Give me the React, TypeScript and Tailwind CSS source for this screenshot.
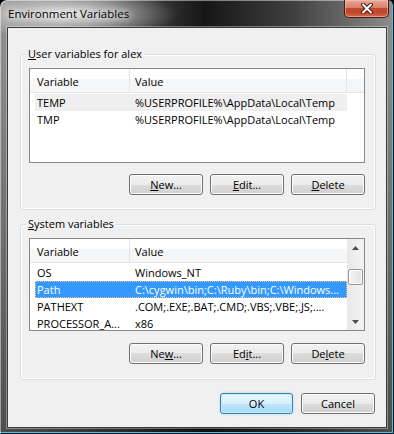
import type { ReactNode } from 'react';

type Row = { name: string; value: string; state?: 'selected' | 'inactive' };

const userVars: Row[] = [
  { name: 'TEMP', value: '%USERPROFILE%\\AppData\\Local\\Temp', state: 'inactive' },
  { name: 'TMP', value: '%USERPROFILE%\\AppData\\Local\\Temp' },
];

const systemVars: Row[] = [
  { name: 'OS', value: 'Windows_NT' },
  { name: 'Path', value: 'C:\\cygwin\\bin;C:\\Ruby\\bin;C:\\Windows...', state: 'selected' },
  { name: 'PATHEXT', value: '.COM;.EXE;.BAT;.CMD;.VBS;.VBE;.JS;....' },
  { name: 'PROCESSOR_A...', value: 'x86' },
];

function WinButton({ children, primary }: { children: ReactNode; primary?: boolean }) {
  return (
    <button
      className={
        primary
          ? 'w-[73px] h-[21px] rounded-[3px] border border-[#3c7fb1] bg-[linear-gradient(#eaf6fd_0%,#d9f0fc_50%,#bee6fd_50%,#a7d9f5_100%)] shadow-[inset_0_0_0_1px_#c5ecfc,0_0_3px_#9fdcf8] leading-[19px] text-center'
          : 'w-[74px] h-[21px] rounded-[3px] border border-[#707070] bg-[linear-gradient(#f2f2f2_0%,#ebebeb_50%,#dddddd_50%,#cfcfcf_100%)] shadow-[inset_0_0_0_1px_#fcfcfc] leading-[19px] text-center'
      }
    >
      {children}
    </button>
  );
}

function Group({ label, children }: { label: ReactNode; children: ReactNode }) {
  return (
    <div className="relative ml-[12px] h-[156px] w-[356px] rounded-[3px] border border-[#d5dfe5] shadow-[inset_0_0_0_1px_#ffffff] pl-[8px] pt-[13px]">
      <span className="absolute left-[5px] top-[-9px] bg-[#f0f0f0] px-[2px] leading-[16px]">{label}</span>
      {children}
    </div>
  );
}

function Rows({ rows }: { rows: Row[] }) {
  return (
    <div className="pt-[1px]">
      {rows.map((r) => (
        <div
          key={r.name}
          className={
            'ml-[5px] flex h-[17px] w-[312px] leading-[15px] whitespace-nowrap ' +
            (r.state === 'selected'
              ? 'bg-[#3399ff] text-white border border-dotted border-[#f3c27a]'
              : r.state === 'inactive'
                ? 'bg-[#efefef] border border-transparent'
                : 'border border-transparent')
          }
        >
          <div className="w-[95px] shrink-0 overflow-hidden pl-[1px]">{r.name}</div>
          <div className="flex-1 overflow-hidden pl-[4px]">{r.value}</div>
        </div>
      ))}
    </div>
  );
}

function Header({ full }: { full?: boolean }) {
  return (
    <div className="flex h-[24px] border-b border-[#e5e5e5] bg-[linear-gradient(#ffffff_0%,#ffffff_45%,#f5f6f7_45%,#f5f6f7_100%)]">
      <div className="w-[100px] shrink-0 border-r border-[#e5e5e5] pl-[7px] pt-[5px]">Variable</div>
      <div className={full ? 'w-[217px] shrink-0 border-r border-[#e5e5e5] pl-[5px] pt-[5px]' : 'flex-1 pl-[5px] pt-[5px]'}>
        Value
      </div>
      {full && <div className="flex-1" />}
    </div>
  );
}

function Arrow({ down }: { down?: boolean }) {
  return (
    <div className="flex h-[17px] items-center justify-center">
      <svg width="7" height="4" viewBox="0 0 7 4">
        <path d={down ? 'M0 0H7L3.5 4Z' : 'M0 4H7L3.5 0Z'} fill="#4d4d4d" />
      </svg>
    </div>
  );
}

function ButtonRow({ gap, items }: { gap: string; items: ReactNode[] }) {
  return (
    <div className={'flex w-[336px] justify-end gap-[7px] ' + gap}>
      {items.map((it, i) => (
        <WinButton key={i}>{it}</WinButton>
      ))}
    </div>
  );
}

export default function App() {
  return (
    <div className="h-[434px] w-[394px] bg-black font-['Open_Sans','Noto_Sans',sans-serif] text-[11px] text-black">
      <div className="flex h-[434px] w-[394px] flex-col rounded-t-[7px] bg-[radial-gradient(ellipse_110px_26px_at_68px_14px,rgba(255,255,255,0.8),rgba(255,255,255,0)_100%),linear-gradient(180deg,rgba(0,0,0,0)_0%,rgba(0,0,0,0)_12%,rgba(0,0,0,0.45)_100%),linear-gradient(90deg,#8e8e8e_0%,#555555_28%,#161616_52%,#3f3f3f_74%,#8d8d8d_100%)] px-[7px] pb-[6px] shadow-[inset_1px_1px_0_rgba(255,255,255,0.45),inset_-1px_-1px_0_#111111,inset_-2px_-2px_0_#3ac4ee]">
        <div className="flex h-[27px] items-start justify-between">
          <span className="pl-[1px] pt-[6px] text-[11.5px] leading-[16px] [text-shadow:0_0_6px_#ffffff,0_0_10px_#ffffff]">
            Environment Variables
          </span>
          <div className="-mr-[2px] flex h-[18px] w-[45px] items-center justify-center rounded-b-[5px] border border-t-0 border-[#4a1a12] bg-[linear-gradient(#e9a899_0%,#d98069_45%,#c34a31_50%,#c4452c_75%,#d9704f_100%)] shadow-[inset_0_0_0_1px_rgba(255,210,200,0.45)]">
            <svg width="12" height="11" viewBox="0 0 12 11">
              <path d="M2 1.5L10 9.5M10 1.5L2 9.5" stroke="#4b1d14" strokeWidth="4" strokeLinecap="round" />
              <path d="M2 1.5L10 9.5M10 1.5L2 9.5" stroke="#ffffff" strokeWidth="2" strokeLinecap="round" />
            </svg>
          </div>
        </div>

        <div className="flex flex-1 flex-col border border-[#3b3b3b] bg-[#f0f0f0] shadow-[0_0_0_1px_rgba(255,255,255,0.35)]">
          <div className="mt-[26px]">
            <Group label={<><u>U</u>ser variables for alex</>}>
              <div className="h-[95px] w-[336px] overflow-hidden border border-[#828790] bg-white">
                <Header full />
                <Rows rows={userVars} />
              </div>
              <ButtonRow
                gap="mt-[11px]"
                items={[<><u>N</u>ew...</>, <><u>E</u>dit...</>, <><u>D</u>elete</>]}
              />
            </Group>
          </div>

          <div className="mt-[14px]">
            <Group label={<><u>S</u>ystem variables</>}>
              <div className="flex h-[93px] w-[336px] overflow-hidden border border-[#828790] bg-white">
                <div className="flex-1 overflow-hidden">
                  <Header />
                  <Rows rows={systemVars} />
                </div>
                <div className="flex w-[17px] flex-col bg-[linear-gradient(90deg,#e8e8e8,#f4f4f4)]">
                  <Arrow />
                  <div className="flex-1">
                    <div className="mx-[1px] mt-[13px] h-[16px] rounded-[2px] border border-[#979797] bg-[linear-gradient(90deg,#f4f4f4,#e2e2e2)] shadow-[inset_0_0_0_1px_#ffffff]" />
                  </div>
                  <Arrow down />
                </div>
              </div>
              <ButtonRow
                gap="mt-[12px]"
                items={[<>Ne<u>w</u>...</>, <>Ed<u>i</u>t...</>, <>De<u>l</u>ete</>]}
              />
            </Group>
          </div>

          <div className="mr-[11px] mt-[13px] flex justify-end gap-[8px]">
            <WinButton primary>OK</WinButton>
            <WinButton>Cancel</WinButton>
          </div>
        </div>
      </div>
    </div>
  );
}
